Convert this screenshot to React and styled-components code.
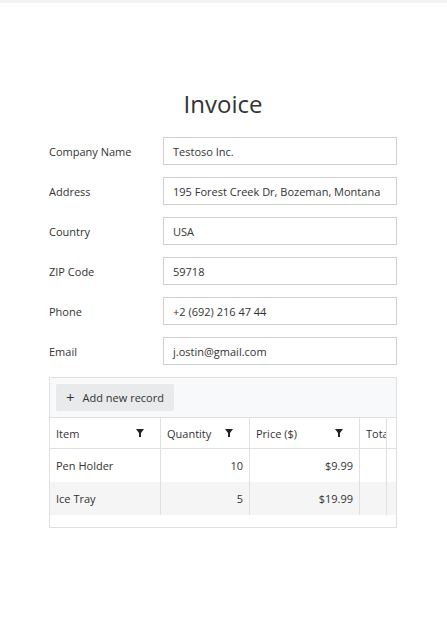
import styled, { createGlobalStyle } from "styled-components";

const Global = createGlobalStyle`
  body { margin: 0; font-family: "Open Sans", "Noto Sans", sans-serif; color: #333; background: #fff; }
`;

const Page = styled.div`
  width: 447px;
  min-height: 637px;
  border-top: 3px solid #f3f3f3;
  box-sizing: border-box;
  padding: 85px 50px 0 49px;
`;

const Title = styled.h1`
  margin: 0 0 17px;
  text-align: center;
  font-weight: 400;
  font-size: 24px;
  line-height: 32px;
  color: #333;
`;

const Row = styled.div`
  display: grid;
  grid-template-columns: 114px 234px;
  align-items: center;
  height: 28px;
  margin-bottom: 12px;
  font-size: 11px;
`;

const Field = styled.div`
  height: 28px;
  border: 1px solid #cfcfcf;
  box-sizing: border-box;
  padding: 0 9px;
  display: flex;
  align-items: center;
  font-size: 11px;
  white-space: nowrap;
  overflow: hidden;
  color: #333;
`;

const Grid = styled.div`
  border: 1px solid #e0e0e0;
  width: 348px;
  box-sizing: border-box;
  font-size: 11px;
`;

const Toolbar = styled.div`
  background: #f8f9fa;
  padding: 6px 6px;
  border-bottom: 1px solid #e0e0e0;
`;

const AddButton = styled.div`
  display: inline-flex;
  align-items: center;
  gap: 8px;
  height: 27px;
  padding: 0 10px;
  background: #e9eaec;
  border-radius: 2px;
  font-size: 11px;
`;

const TableRow = styled.div`
  display: grid;
  grid-template-columns: 111px 89px 110px 27px 1fr;
  height: ${(p) => (p.$head ? "30px" : "33px")};
  background: ${(p) => (p.$alt ? "#f5f5f5" : "#fff")};
  border-bottom: ${(p) => (p.$head ? "1px solid #e0e0e0" : "none")};
`;

const Cell = styled.div`
  display: flex;
  align-items: center;
  justify-content: ${(p) => (p.$right ? "flex-end" : "space-between")};
  padding: 0 6px;
  border-right: ${(p) => (p.$last ? "none" : "1px solid #e0e0e0")};
  overflow: hidden;
  white-space: nowrap;
`;

const Filter = () => (
  <svg width="8" height="8" viewBox="0 0 8 8" style={{ marginRight: 10, flexShrink: 0 }}>
    <path d="M0 0H8L5 4V8H3V4Z" fill="#222" />
  </svg>
);

const fields = [
  ["Company Name", "Testoso Inc."],
  ["Address", "195 Forest Creek Dr, Bozeman, Montana"],
  ["Country", "USA"],
  ["ZIP Code", "59718"],
  ["Phone", "+2 (692) 216 47 44"],
  ["Email", "j.ostin@gmail.com"],
];

const items = [
  ["Pen Holder", "10", "$9.99"],
  ["Ice Tray", "5", "$19.99"],
];

export default function App() {
  return (
    <Page>
      <Global />
      <Title>Invoice</Title>
      {fields.map(([l, v]) => (
        <Row key={l}>
          <span>{l}</span>
          <Field>{v}</Field>
        </Row>
      ))}
      <Grid>
        <Toolbar>
          <AddButton>
            <span style={{ fontSize: 15, lineHeight: 1 }}>+</span>Add new record
          </AddButton>
        </Toolbar>
        <TableRow $head>
          <Cell>Item<Filter /></Cell>
          <Cell>Quantity<Filter /></Cell>
          <Cell>Price ($)<Filter /></Cell>
          <Cell style={{ paddingRight: 0 }}>Tota</Cell>
          <Cell $last />
        </TableRow>
        {items.map(([n, q, p], i) => (
          <TableRow key={n} $alt={i % 2 === 1}>
            <Cell>{n}</Cell>
            <Cell $right>{q}</Cell>
            <Cell $right>{p}</Cell>
            <Cell />
            <Cell $last />
          </TableRow>
        ))}
        <div style={{ height: 12 }} />
      </Grid>
    </Page>
  );
}
